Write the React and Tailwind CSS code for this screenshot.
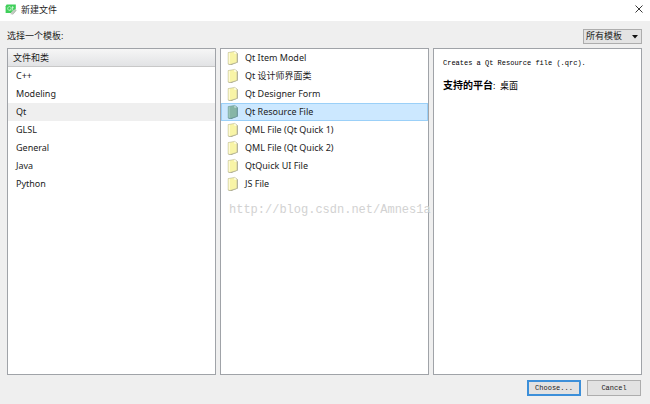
import { useState } from "react";

const categories = ["C++", "Modeling", "Qt", "GLSL", "General", "Java", "Python"];

const templates = [
  "Qt Item Model",
  "Qt 设计师界面类",
  "Qt Designer Form",
  "Qt Resource File",
  "QML File (Qt Quick 1)",
  "QML File (Qt Quick 2)",
  "QtQuick UI File",
  "JS File",
];

function QtLogo() {
  return (
    <svg viewBox="0 0 12 11" className="h-[11px] w-3 shrink-0" aria-hidden="true">
      <path d="M1.6 .6H10.8V6.6L8.6 9H0.6V2.2Z" fill="#3fcf5a" />
      <path d="M4.4 2.6a1.7 1.9 0 1 0 .1 0M5 5.4l1 1.2M7.6 2.2v3.6q0 .8.9.6M6.8 3.4h1.9" fill="none" stroke="#d9f9dd" strokeWidth=".8" />
      <path d="M6.3 8 10.6 4.8 11.4 6 7.6 10.6 5.4 10.2Z" fill="#c4cbc2" />
      <path d="M7.8 10.4 11.4 6.2" stroke="#9aa39a" strokeWidth=".6" />
    </svg>
  );
}

function FileIcon({ selected }) {
  return (
    <svg viewBox="0 0 12 16" className="h-4 w-3 shrink-0" aria-hidden="true">
      <path d="M9 2.4 10.8 3.4V12.6L4.4 15 1.4 14.6Z" fill={selected ? "#5f8890" : "#a3a38e"} />
      <path
        d="M1.2 2.6 7.8 1.4 10 3.2V12.4L3 14.6 1.2 14Z"
        fill={selected ? "#86b5a6" : "#f8f4a6"}
        stroke={selected ? "#6f9c9c" : "#b5b394"}
        strokeWidth=".6"
      />
      <path d="M1.7 3V13.6L3 14V2.8Z" fill={selected ? "#9cc6ba" : "#fffbd4"} />
      <path d="M7.4 1.6V3.8L9.8 3.6Z" fill={selected ? "#c5dfdd" : "#fffff2"} />
    </svg>
  );
}

export default function App() {
  const [category, setCategory] = useState("Qt");
  const [template, setTemplate] = useState("Qt Resource File");

  return (
    <div className="flex min-h-screen flex-col bg-[#efefef] font-['Noto_Sans','Noto_Sans_CJK_SC',sans-serif] text-[9px] leading-3 text-[#1c1c1c]">
      <header className="flex h-[21px] items-center justify-between bg-white pr-[7px] pl-[5px]">
        <div className="flex items-center gap-1 pb-[2px]">
          <QtLogo />
          <h1 className="text-[9px]">新建文件</h1>
        </div>
        <button type="button" aria-label="关闭" className="pb-[3px]">
          <svg viewBox="0 0 8 8" className="size-2" aria-hidden="true">
            <path d="M.5.5 7.5 7.5M7.5.5.5 7.5" stroke="#222" strokeWidth=".9" />
          </svg>
        </button>
      </header>

      <main className="flex flex-1 flex-col pr-2 pl-[7px]">
        <div className="flex h-[27px] items-center justify-between pt-[3px]">
          <label htmlFor="filter">选择一个模板:</label>
          <div className="relative">
            <select
              id="filter"
              className="block h-[15px] w-[59px] appearance-none border border-[#adadad] bg-[#e3e3e3] pl-[2px] text-[9px] leading-3"
            >
              <option>所有模板</option>
            </select>
            <svg viewBox="0 0 6 4" className="pointer-events-none absolute top-[6px] right-1 h-1 w-[6px]" aria-hidden="true">
              <path d="M0 0H6L3 3.6Z" fill="#111" />
            </svg>
          </div>
        </div>

        <div className="grid flex-1 grid-cols-3 gap-1">
          <section className="border border-[#a0a3a8] bg-white">
            <h2 className="flex h-[18px] items-center border-b border-[#c8c8c8] bg-linear-to-b from-[#f6f6f6] to-[#e2e3e5] pl-[5px] text-[9px]">
              文件和类
            </h2>
            <ul>
              {categories.map((name) => (
                <li key={name}>
                  <button
                    type="button"
                    onClick={() => setCategory(name)}
                    className={`flex h-[18px] w-full items-center pl-2 ${name === category ? "bg-[#efefef]" : ""}`}
                  >
                    {name}
                  </button>
                </li>
              ))}
            </ul>
          </section>

          <section className="relative border border-[#a0a3a8] bg-white">
            <ul>
              {templates.map((name) => (
                <li key={name}>
                  <button
                    type="button"
                    onClick={() => setTemplate(name)}
                    className={`flex h-[18px] w-full items-center gap-[6px] border pl-[5px] ${
                      name === template ? "border-[#9bd0f8] bg-[#cce8ff]" : "border-transparent"
                    }`}
                  >
                    <FileIcon selected={name === template} />
                    {name}
                  </button>
                </li>
              ))}
            </ul>
            <p className="pointer-events-none absolute top-[153px] left-2 font-['Liberation_Mono',monospace] text-[12px] leading-4 whitespace-nowrap text-[#d2d2d2]">
              http://blog.csdn.net/Amnes1a
            </p>
          </section>

          <section className="border border-[#a0a3a8] bg-white px-[9px] py-2 text-black">
            <p className="font-['Liberation_Mono',monospace] text-[7px] leading-3">Creates a Qt Resource file (.qrc).</p>
            <p className="mt-[10px]">
              <b className="text-[10px] leading-3">支持的平台</b>:&nbsp; 桌面
            </p>
          </section>
        </div>

        <footer className="flex h-[29px] items-start justify-end gap-[6px] pt-[5px] pr-px font-['Liberation_Mono',monospace] text-[7px]">
          <button type="button" className="h-4 w-[54px] border-2 border-[#3c8fd9] bg-[#e2e2e2]">
            Choose...
          </button>
          <button type="button" className="h-4 w-[54px] border border-[#adadad] bg-[#e2e2e2]">
            Cancel
          </button>
        </footer>
      </main>
    </div>
  );
}
